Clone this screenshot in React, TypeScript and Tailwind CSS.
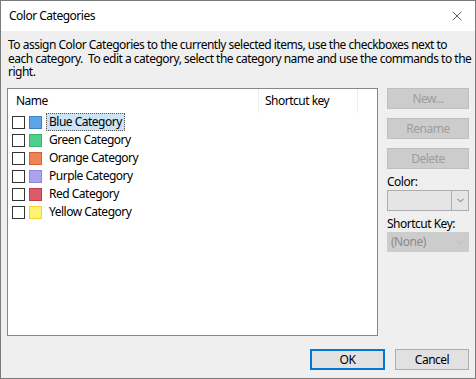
import { ChevronDown, X } from 'lucide-react';

const CATEGORIES = [
  { name: 'Blue Category', fill: 'bg-[#5ea2e8]', border: 'border-[#3a80cc]' },
  { name: 'Green Category', fill: 'bg-[#4fcf89]', border: 'border-[#36b26f]' },
  { name: 'Orange Category', fill: 'bg-[#ef8356]', border: 'border-[#d9602e]' },
  { name: 'Purple Category', fill: 'bg-[#aba3ec]', border: 'border-[#8f85db]' },
  { name: 'Red Category', fill: 'bg-[#dc5b69]', border: 'border-[#c63a4a]' },
  { name: 'Yellow Category', fill: 'bg-[#fff270]', border: 'border-[#f2d530]' },
];

function DisabledButton({ label }: { label: string }) {
  return (
    <div className="h-[21px] w-[82px] border border-[#bfbfbf] bg-[#cccccc] flex items-center justify-center text-[#9d9d9d]">
      {label}
    </div>
  );
}

export default function App() {
  return (
    <div
      className="w-[476px] h-[379px] border border-[#7a7a7a] bg-[#efefef] flex flex-col text-[12px] tracking-[-0.5px] text-black overflow-hidden whitespace-nowrap"
      style={{ fontFamily: '"Segoe UI", "Noto Sans", sans-serif' }}
    >
      <div className="h-[30px] bg-white flex items-center justify-between pl-[8px] pr-[10px] shrink-0">
        <span className="text-[12px]">Color Categories</span>
        <X size={16} strokeWidth={1.2} className="text-[#333]" />
      </div>

      <div className="px-[7px] pt-[7px] leading-[13.5px]">
        To assign Color Categories to the currently selected items, use the checkboxes next to
        <br />
        each category.&nbsp; To edit a category, select the category name and use the commands to the
        <br />
        right.
      </div>

      <div className="flex pl-[6px] pt-[9.5px] gap-[9px]">
        <div className="w-[371px] h-[248px] border border-[#828790] bg-white flex flex-col">
          <div className="flex h-[24px] items-center shrink-0">
            <div className="w-[250px] pl-[8px]">Name</div>
            <div className="w-[100px] h-full border-l border-r border-[#ececec] pl-[6px] flex items-center">
              Shortcut key
            </div>
          </div>
          <div className="flex flex-col">
            {CATEGORIES.map((c, i) => (
              <div key={c.name} className="flex items-center h-[18px] pl-[4px]">
                <div className="w-[13px] h-[13px] border border-[#333] bg-white" />
                <div className={`w-[13px] h-[13px] ml-[4px] border ${c.fill} ${c.border}`} />
                {i === 0 ? (
                  <div className="ml-[4px] px-[2px] h-[18px] flex items-center bg-[#cce4f7] border border-dotted border-[#555]">
                    {c.name}
                  </div>
                ) : (
                  <div className="ml-[7px]">{c.name}</div>
                )}
              </div>
            ))}
          </div>
        </div>

        <div className="flex flex-col w-[82px]">
          <DisabledButton label="New..." />
          <div className="h-[9px]" />
          <DisabledButton label="Rename" />
          <div className="h-[9px]" />
          <DisabledButton label="Delete" />
          <div className="mt-[5px] leading-[16px]">Color:</div>
          <div className="h-[21px] flex border border-[#adadad] bg-[#e5e5e5]">
            <div className="flex-1" />
            <div className="w-[17px] border-l border-[#adadad] flex items-center justify-center">
              <ChevronDown size={11} strokeWidth={1.5} className="text-[#333]" />
            </div>
          </div>
          <div className="mt-[5px] leading-[16px]">Shortcut Key:</div>
          <div className="h-[20px] flex items-center justify-between bg-[#cccccc] border border-[#cccccc] pl-[3px] pr-[3px] text-[#8a8a8a]">
            <span>(None)</span>
            <ChevronDown size={11} strokeWidth={1.2} className="text-[#a9a9a9]" />
          </div>
        </div>
      </div>

      <div className="flex justify-end gap-[10px] pr-[6px] mt-[13px]">
        <div className="w-[75px] h-[21px] border-2 border-[#0078d7] bg-[#e1e1e1] flex items-center justify-center">
          OK
        </div>
        <div className="w-[74px] h-[21px] border border-[#adadad] bg-[#e1e1e1] flex items-center justify-center">
          Cancel
        </div>
      </div>
    </div>
  );
}
